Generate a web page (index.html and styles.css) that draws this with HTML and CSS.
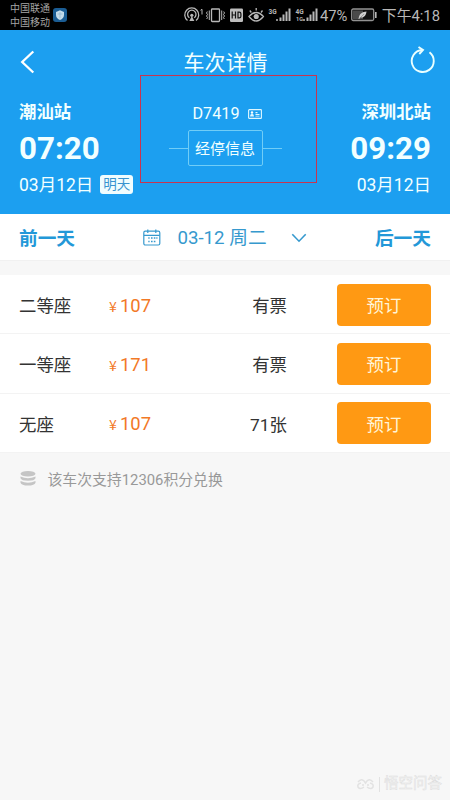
FILE: index.html
```html
<!DOCTYPE html>
<html lang="zh-CN">
<head>
<meta charset="utf-8">
<meta name="viewport" content="width=device-width">
<title>车次详情</title>
<link rel="stylesheet" href="styles.css">
</head>
<body>
<div class="screen">
  <div class="status">
    <div class="carriers"><span>中国联通</span><span>中国移动</span></div>
    <svg class="shield" width="14" height="14" viewBox="0 0 14 14"><rect width="14" height="14" rx="3" fill="#1b5d94"/><path d="M7 2.3 11 4v3c0 2.4-1.6 4-4 5-2.4-1-4-2.6-4-5V4z" fill="#c5dcea"/><path d="M7 4v6M4.500 6h5" stroke="#8cb6d1" stroke-width=".7"/></svg>
    <svg class="indicators" width="137" height="20" viewBox="183 5 137 20" fill="none" stroke="#b8b8b8" stroke-width="1.300">
      <path d="M187.500 20.500a7 7 0 1 1 8.500 0M189.400 17.800a4.200 4.200 0 1 1 4.800 0"/><circle cx="191.800" cy="15.300" r="1.600" fill="#b8b8b8" stroke="none"/><path d="m191.800 16-2.500 5h5z" fill="#b8b8b8" stroke="none"/>
      <path d="M200.500 10.300 202 9.300V14.500" stroke-width="1"/>
      <rect x="211.500" y="9" width="8" height="12.500" rx=".8"/><path d="M209.300 10.500v9.500M221.700 10.500v9.500" stroke-width="1"/><path d="m207.300 11.500-.8 1.500 1 1.500-1 1.500 1 1.500-.8 1.500M223.700 11.500l.8 1.500-1 1.500 1 1.500-1 1.500.8 1.500" stroke-width="1"/>
      <rect x="230" y="8.500" width="13" height="13.500" rx="1.200" fill="#bdbdbd" stroke="none"/><path d="M232.200 11.500v7M235.500 11.500v7M232.200 15h3.300M238 12.100v5.800h1.200q1.700 0 1.700-1.700v-2.400q0-1.700-1.700-1.700z" stroke="#111" stroke-width="1.200"/>
      <path d="M249 16.500q7.200-8 14.400 0-7.200 9-14.400 0zM251.300 12.500l-1.500-2M256.200 10.500V8M261 12.500l1.500-2"/><circle cx="256.200" cy="16.500" r="2.600" fill="#b8b8b8" stroke="none"/>
      <g fill="#b8b8b8" stroke="none"><circle cx="277" cy="20" r="1"/><path d="M279.500 17.500h2V21h-2zM282.500 14.500h2V21h-2zM285.500 11.500h2V21h-2zM288.500 8.500h2V21h-2zM306.500 17.500h2V21h-2zM309.500 14.500h2V21h-2zM312.500 11.500h2V21h-2zM315.500 8.500h2V21h-2z"/><circle cx="304" cy="20" r="1"/></g>
      <g class="net"><text x="268.500" y="13.800">3G</text><text x="295.500" y="13.800">4G</text><text x="296" y="21.300" class="tiny">1G</text></g>
    </svg>
    <span class="percent">47%</span>
    <svg class="battery" width="26" height="14" viewBox="0 0 26 14"><rect x=".7" y="1" width="22" height="11.500" rx="1.500" fill="#111" stroke="#929292" stroke-width="1.300"/><path d="M2 2.500h10v8.500H2z" fill="#4a4a4a"/><path d="M24 4h1.600v6H24z" fill="#b8b8b8"/><path d="M7.500 11c1-6 4-7 8-7.500-.4 4-2.500 6.500-6.500 6l-.7 1.500z" fill="#cfcfcf"/><path d="m9 10 4-4" stroke="#777" stroke-width=".6"/></svg>
    <span class="clock">下午4:18</span>
  </div>

  <header class="hero">
    <div class="titlebar">
      <svg width="16" height="24" viewBox="0 0 16 24" fill="none" stroke="#fff" stroke-width="2.300"><path d="M13.300 1.500 2.200 12l11.100 10.500"/></svg>
      <h1>车次详情</h1>
      <svg class="refresh" width="26" height="28" viewBox="0 0 26 28" fill="none" stroke="#eaffff" stroke-width="1.900"><path d="M19.500 6.300A11 11 0 1 1 12 4"/><path d="m8.500 1 4.500 3-3.700 4"/></svg>
    </div>
    <div class="trip">
      <div class="stop">
        <b class="station">潮汕站</b><b class="time">07:20</b>
        <div class="date">03月12日<span class="tag">明天</span></div>
      </div>
      <div class="train">
        <div class="number">D7419
          <svg width="14" height="10" viewBox="0 0 14 10"><rect x=".6" y=".6" width="12.800" height="8.800" rx=".7" fill="none" stroke="#dff7ff" stroke-width="1.100"/><circle cx="4" cy="3.500" r="1.200" fill="#fff"/><path d="M2 7.500q0-2.700 2-2.700t2 2.700zM7.500 3h2v1.200h-2zM7.500 5h4v.9h-4zM7.500 6.700h4v.9h-4z" fill="#dff7ff"/></svg>
        </div>
        <div class="via"><span class="via-button">经停信息</span></div>
      </div>
      <div class="stop arrival">
        <b class="station">深圳北站</b><b class="time">09:29</b>
        <div class="date">03月12日</div>
      </div>
      <div class="highlight"></div>
    </div>
  </header>

  <nav class="days">
    <b>前一天</b>
    <div class="current">
      <svg width="18" height="17" viewBox="0 0 18 17" fill="none" stroke="#3699ce" stroke-width="1.200"><rect x=".8" y="2.200" width="16" height="13.800" rx="1.500"/><path d="M1 6.300h15.600M4.800.5v3.600M12.800.5v3.600"/><path d="M8 9h1.600M10.800 9h1.600M13.300 9h1.200M5.300 9h1.300M8 12.500h1.600M10.800 12.500h1.600M5.300 12.500h1.300" stroke-width="1.700"/></svg>
      <span>03-12 周二</span>
      <svg class="chevron" width="16" height="10" viewBox="0 0 16 10" fill="none" stroke="#3699ce" stroke-width="1.600"><path d="m1.300 1.200 6.700 7 6.700-7"/></svg>
    </div>
    <b>后一天</b>
  </nav>

  <main class="seats">
    <div class="seat"><span>二等座</span><span class="price"><small>¥</small>107</span><span class="left">有票</span><button>预订</button></div>
    <div class="seat"><span>一等座</span><span class="price"><small>¥</small>171</span><span class="left">有票</span><button>预订</button></div>
    <div class="seat"><span>无座</span><span class="price"><small>¥</small>107</span><span class="left">71张</span><button>预订</button></div>
  </main>

  <div class="note">
    <svg width="16" height="15" viewBox="0 0 16 15" fill="#c5c5c5"><ellipse cx="8" cy="2.800" rx="7.500" ry="2.800"/><path d="M.5 5.500q7.500 3.400 15 0v1.700q-1 2.500-7.500 2.500T.5 7.200zM.5 10q7.500 3.400 15 0v1.700q-1 2.800-7.500 2.800T.5 11.700z"/></svg>
    <span>该车次支持12306积分兑换</span>
  </div>

  <footer class="watermark">
    <svg width="19" height="12" viewBox="0 0 19 12" fill="none" stroke="#e2e2e2" stroke-width="1.500"><path d="M2 4q4-5 7.500 1 3.500-6 7.500-1M5 5q-4 1-3 4 2 3 6 0M14 5q4 1 3 4-2 3-6 0M6 7h2M11 7h2"/></svg>
    <i></i><span>悟空问答</span>
  </footer>
</div>
</body>
</html>
```
FILE: styles.css
```css
* { box-sizing: border-box; }
body {
  margin: 0;
  font-family: Roboto, "Noto Sans CJK SC", sans-serif;
  color: #333;
}
.screen {
  width: 450px;
  height: 800px;
  display: flex;
  flex-direction: column;
  background: #f7f7f7;
  overflow: hidden;
}
.status {
  height: 30px;
  flex: none;
  display: flex;
  align-items: center;
  padding: 0 10px;
  background: #000;
  color: #b8b8b8;
  font-size: 14.8px;
  white-space: nowrap;
}
.carriers {
  display: flex;
  flex-direction: column;
  width: 42px;
  padding-top: 2px;
  font-size: 10px;
  line-height: 14px;
  color: #a5a5a5;
}
.shield { flex: none; margin-left: 1px; }
.indicators { flex: none; margin-left: 116px; }
.net text { font: bold 6.5px Roboto, sans-serif; fill: #b8b8b8; stroke: none; }
.net .tiny { font-size: 5.5px; }
.percent { width: 31px; padding-top: 1px; }
.battery { flex: none; }
.clock { margin-left: 5px; padding-bottom: 1px; }

.hero {
  height: 184px;
  flex: none;
  background: #1c9ff0;
  color: #f2ffff;
}
.titlebar {
  height: 63px;
  display: flex;
  justify-content: space-between;
  align-items: center;
  padding: 0 15px 0 20px;
}
.titlebar h1 { margin: 2px 0 0 5px; font-size: 21px; font-weight: 400; line-height: 30px; }
.refresh { margin: 0 -1px 3px 0; }
.trip {
  position: relative;
  display: grid;
  grid-template-columns: 150px 1fr 150px;
  padding: 0 19px;
}
.stop { display: flex; flex-direction: column; }
.station { font-size: 17.4px; line-height: 26px; margin-top: 6px; }
.time { font-size: 31.3px; line-height: 36px; margin-top: 6px; }
.date {
  display: flex;
  align-items: center;
  font-size: 17.5px;
  line-height: 26px;
  margin-top: 5px;
}
.arrival { text-align: right; }
.arrival .date { justify-content: flex-end; }
.tag {
  margin-left: 7px;
  padding: 0 3px;
  border-radius: 3px;
  background: #f0fdff;
  color: #3993cf;
  font-size: 13.5px;
  line-height: 19px;
  margin-top: -2px;
}
.train { display: flex; flex-direction: column; align-items: center; margin: 0 -10px; }
.number {
  display: flex;
  align-items: center;
  gap: 8px;
  margin-top: 10px;
  margin-left: 4px;
  font-size: 16.2px;
  line-height: 22px;
}
.via { display: flex; align-items: center; margin-top: 5px; }
.via::before, .via::after { content: ""; width: 19px; height: 1px; background: #70cdf7; }
.via-button {
  width: 75px;
  height: 36px;
  border: 1px solid #70cdf7;
  border-radius: 2px;
  text-align: center;
  font-size: 15px;
  line-height: 36px;
}
.highlight {
  position: absolute;
  left: 140px;
  top: -18px;
  width: 177px;
  height: 108px;
  border: 1px solid #c93450;
}

.days {
  height: 47px;
  flex: none;
  display: flex;
  align-items: center;
  justify-content: space-between;
  padding: 0 19px;
  background: #fff;
  border-bottom: 1px solid #f1f1f1;
  color: #2398d8;
  font-size: 18.7px;
  line-height: 26px;
}
.days b { margin-top: 3px; }
.current { display: flex; align-items: center; color: #3699ce; }
.current span { margin: 2px 0 0 16px; }
.chevron { margin: 2px 0 0 24px; }

.seats { margin-top: 14px; background: #fff; }
.seat {
  height: 59.3px;
  display: grid;
  grid-template-columns: 89px 113px 98px 94px;
  align-items: center;
  padding: 1px 0 0 19px;
  border-bottom: 1px solid #f3f3f3;
  font-size: 17.4px;
}
.price { padding: 1px 0 0 1px; color: #f27927; font-size: 18.4px; }
.price small { display: inline-block; width: 11px; font-size: 14px; font-family: "Noto Sans CJK SC", sans-serif; line-height: 18px; }
.left { text-align: right; padding-right: 32px; }
.seat button {
  margin-left: 18px;
  width: 94px;
  height: 42px;
  padding: 0;
  border: 0;
  border-radius: 4px;
  background: #ff9913;
  color: #fff5d8;
  font: 17.4px Roboto, "Noto Sans CJK SC", sans-serif;
}
.note {
  display: flex;
  align-items: center;
  gap: 11.5px;
  height: 52px;
  padding-left: 20px;
  color: #999;
  font-size: 14.85px;
}
.watermark {
  display: flex;
  align-items: center;
  gap: 4px;
  margin: auto 8px 6px auto;
  color: #f7f7f7;
  font-size: 14.5px;
  line-height: 20px;
  -webkit-text-stroke: .5px #dedede;
}
.watermark i { width: 1px; height: 15px; background: #e2e2e2; }
```
